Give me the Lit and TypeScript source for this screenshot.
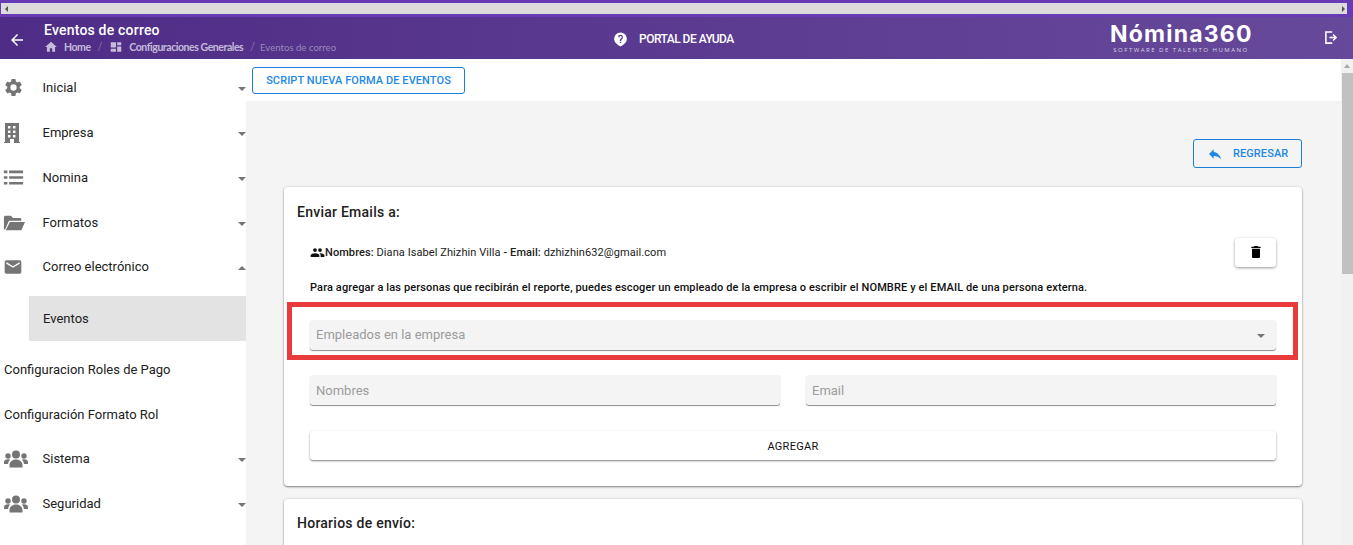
import { LitElement, html, css, svg } from "lit";
import { customElement } from "lit/decorators.js";

const icons: Record<string, any> = {
  gear: svg`<path d="M19.14 12.94c.04-.3.06-.61.06-.94s-.02-.64-.07-.94l2.03-1.58a.5.5 0 0 0 .12-.61l-1.92-3.32a.5.5 0 0 0-.59-.22l-2.39.96a7 7 0 0 0-1.62-.94l-.36-2.54a.48.48 0 0 0-.48-.41h-3.84a.47.47 0 0 0-.47.41l-.36 2.54c-.59.24-1.13.57-1.62.94l-2.39-.96a.49.49 0 0 0-.59.22L2.74 8.87a.48.48 0 0 0 .12.61l2.03 1.58c-.05.3-.09.63-.09.94s.02.64.07.94l-2.03 1.58a.5.5 0 0 0-.12.61l1.92 3.32c.12.22.37.29.59.22l2.39-.96c.5.38 1.03.7 1.62.94l.36 2.54c.05.24.24.41.48.41h3.84c.24 0 .44-.17.47-.41l.36-2.54c.59-.24 1.13-.56 1.62-.94l2.39.96c.22.08.47 0 .59-.22l1.92-3.32a.48.48 0 0 0-.12-.61l-2.01-1.58zM12 15.6A3.6 3.6 0 1 1 12 8.4a3.6 3.6 0 0 1 0 7.2z"/>`,
  building: svg`<path fill-rule="evenodd" d="M5 2h14v19h1v1h-6v-4h-4v4H4v-1h1V2zm3 3v2.500h2.500V5H8zm5 0v2.500h2.500V5H13zM8 9.500V12h2.500V9.500H8zm5 0V12h2.500V9.500H13zM8 14v2.500h2.500V14H8zm5 0v2.500h2.500V14H13z"/>`,
  list: svg`<path d="M1 4h4v3H1zM7 4h16v3H7zM1 10.500h4v3H1zM7 10.500h16v3H7zM1 17h4v3H1zM7 17h16v3H7z"/>`,
  folder: svg`<path d="M1 5.500C1 4.700 1.700 4 2.500 4h6L11 6.500h7.500c.8 0 1.500.7 1.500 1.500v1.500H6.500L2.300 19H1V5.500zM7.500 11H24l-4 9H3l4.500-9z"/>`,
  mail: svg`<path d="M20 4H4a2 2 0 0 0-2 2v12a2 2 0 0 0 2 2h16a2 2 0 0 0 2-2V6a2 2 0 0 0-2-2zm0 4-8 5-8-5V6l8 5 8-5v2z"/>`,
  users: svg`<path d="M12 3.500a4 4 0 1 1 0 8 4 4 0 0 1 0-8zM4 6.300a2.700 2.700 0 1 1 0 5.400 2.700 2.700 0 0 1 0-5.400zM20 6.300a2.700 2.700 0 1 1 0 5.400 2.700 2.700 0 0 1 0-5.400zM5.500 20.500V18c0-3 2.500-5.500 6.500-5.500s6.500 2.500 6.500 5.500v2.500h-13zM0 17v-2c0-1.800 1.800-2.700 4-2.700.8 0 1.500.1 2 .4-1.200 1.200-1.900 2.800-1.900 4.300H0zM24 17h-4.100c0-1.500-.7-3.100-1.900-4.300.5-.3 1.200-.4 2-.4 2.200 0 4 .9 4 2.700v2z"/>`,
  group: svg`<path d="M16 11a3 3 0 1 0 0-6 3 3 0 0 0 0 6zm-8 0a3 3 0 1 0 0-6 3 3 0 0 0 0 6zm0 2c-2.330 0-7 1.170-7 3.500V19h14v-2.500C15 14.170 10.330 13 8 13zm8 0c-.29 0-.62.02-.97.05C16.190 13.890 17 15.020 17 16.500V19h6v-2.500c0-2.330-4.670-3.500-7-3.500z"/>`,
  back: svg`<path d="M20 11H7.830l5.590-5.590L12 4l-8 8 8 8 1.410-1.410L7.830 13H20v-2z"/>`,
  home: svg`<path d="M10 20v-6h4v6h5v-8h3L12 3 2 12h3v8z"/>`,
  dash: svg`<path d="M3 4h9v9H3zM14 4h7v5h-7zM14 11h7v9h-7zM3 15h9v5H3z"/>`,
  help: svg`<path fill-rule="evenodd" d="M12 2a9 9 0 0 0-9 9c0 5 4 8 9 11 5-3 9-6 9-11a9 9 0 0 0-9-9zm1 15h-2v-2h2v2zm1.800-6.200-.8.9c-.7.6-1 1.100-1 2.300h-2v-.5c0-1 .4-1.800 1-2.400l1.200-1.300c.3-.3.500-.7.500-1.100 0-.8-.7-1.500-1.500-1.500s-1.500.7-1.500 1.500H8.500a3.500 3.500 0 1 1 7 0c0 .9-.3 1.600-.7 2.100z"/>`,
  logout: svg`<path d="M3 3h10v2.200H5.200v13.600H13V21H3V3zM13.500 8.500 14.900 7l5.100 5-5.100 5-1.400-1.500 2.400-2.400H9v-2.200h6.900l-2.400-2.400z"/>`,
  reply: svg`<path d="M10 9V5l-7 7 7 7v-4.100c5 0 8.500 1.600 11 5.100-1-5-4-10-11-11z"/>`,
  trash: svg`<path d="M6 19c0 1.100.9 2 2 2h8c1.100 0 2-.9 2-2V7H6v12zM19 4h-3.500l-1-1h-5l-1 1H5v2h14V4z"/>`,
};

const icon = (name: string, cls = "") =>
  html`<svg class=${cls} viewBox="0 0 24 24" fill="currentColor">${icons[name]}</svg>`;

type NavItem = { label: string; icon?: string; caret?: "down" | "up"; sub?: boolean; tight?: boolean };

const nav: NavItem[] = [
  { label: "Inicial", icon: "gear", caret: "down" },
  { label: "Empresa", icon: "building", caret: "down" },
  { label: "Nomina", icon: "list", caret: "down" },
  { label: "Formatos", icon: "folder", caret: "down" },
  { label: "Correo electrónico", icon: "mail", caret: "up", tight: true },
  { label: "Eventos", sub: true },
  { label: "Configuracion Roles de Pago" },
  { label: "Configuración Formato Rol" },
  { label: "Sistema", icon: "users", caret: "down", tight: true },
  { label: "Seguridad", icon: "users", caret: "down" },
];

@customElement("app-root")
export class AppRoot extends LitElement {
  static styles = css`
    :host {
      display: flex;
      flex-direction: column;
      width: 1353px;
      height: 545px;
      overflow: hidden;
      font-family: Roboto, "Liberation Sans", sans-serif;
      font-size: 13px;
      color: #212121;
      background: #fff;
    }
    .top-strip {
      flex: none;
      height: 17px;
      box-sizing: border-box;
      padding: 3px 6px 3px 1px;
      background: #683ab3;
    }
    .hscroll {
      height: 11px;
      background: #dcdcdc;
      display: flex;
      justify-content: space-between;
      align-items: center;
      padding: 0 2px 0 4px;
    }
    .arrow-l,
    .arrow-r {
      width: 0;
      height: 0;
      border-top: 3px solid transparent;
      border-bottom: 3px solid transparent;
    }
    .arrow-l {
      border-right: 3px solid #555;
    }
    .arrow-r {
      border-left: 3px solid #555;
    }
    header {
      flex: none;
      height: 42px;
      display: flex;
      align-items: center;
      color: #fff;
      background: linear-gradient(90deg, #4f2c86, #67499b);
    }
    .back {
      width: 18px;
      height: 18px;
      margin: 4px 18px 0 8px;
      flex: none;
    }
    .titles {
      width: 558px;
      flex: none;
      align-self: flex-start;
      padding-top: 5px;
    }
    .title {
      font-size: 14px;
      font-weight: 500;
      line-height: 16px;
      letter-spacing: 0.2px;
    }
    .crumbs {
      display: flex;
      align-items: center;
      font-family: Lato, sans-serif;
      font-size: 10.500px;
      height: 14px;
      margin-top: 2px;
      color: rgba(255, 255, 255, 0.68);
    }
    .crumbs svg {
      width: 14px;
      height: 14px;
      margin-right: 6px;
    }
    .crumbs b {
      font-weight: 700;
      letter-spacing: -0.44px;
    }
    .crumbs i {
      font-style: normal;
      margin: 0 7px;
      color: rgba(255, 255, 255, 0.35);
    }
    .crumbs span {
      color: rgba(255, 255, 255, 0.42);
      font-size: 9.600px;
      margin-left: -2px;
    }
    .portal {
      display: flex;
      align-items: center;
      width: 498px;
      flex: none;
      margin: 2px 0 0 10px;
      font-size: 12px;
      font-weight: 500;
      letter-spacing: -0.52px;
    }
    .portal svg {
      width: 17px;
      height: 17px;
      margin-right: 10px;
    }
    .logo {
      width: 170px;
      flex: none;
      text-align: center;
      padding-right: 28px;
      box-sizing: border-box;
    }
    .logo-name {
      font-family: Inter, sans-serif;
      font-weight: 700;
      font-size: 23px;
      line-height: 23px;
      letter-spacing: 1.200px;
      margin-top: 1px;
      white-space: nowrap;
    }
    .logo-sub {
      font-family: "Open Sans", sans-serif;
      font-size: 6px;
      line-height: 8px;
      letter-spacing: 1.500px;
      white-space: nowrap;
      color: rgba(255, 255, 255, 0.75);
    }
    .logout {
      width: 17px;
      height: 17px;
      margin-left: 43px;
      margin-top: -2px;
      flex: none;
    }
    .body {
      flex: 1;
      min-height: 0;
      display: flex;
    }
    nav {
      flex: none;
      width: 246px;
      padding-top: 6px;
      box-sizing: border-box;
    }
    .item {
      height: 45px;
      display: flex;
      align-items: center;
      padding-left: 4px;
    }
    .item.tight {
      margin-top: -1px;
    }
    .item.sub {
      margin: 7px 0 6px 29px;
      padding-left: 14px;
      background: #e3e3e3;
    }
    .ico {
      flex: none;
      width: 38.500px;
      display: flex;
      align-items: center;
      color: #757575;
    }
    .ico.gear svg {
      width: 21px;
      height: 21px;
      margin-left: -1.400px;
    }
    .ico.building svg {
      width: 24px;
      height: 24px;
      margin-left: -4px;
    }
    .ico.list svg {
      width: 21px;
      height: 21px;
      margin-left: -1px;
    }
    .ico.folder svg {
      width: 22px;
      height: 22px;
      margin-left: -1px;
    }
    .ico.mail svg {
      width: 20px;
      height: 20px;
      margin-left: -0.700px;
    }
    .ico.users svg {
      width: 24px;
      height: 24px;
    }
    .label {
      flex: 1;
    }
    .caret {
      width: 0;
      height: 0;
      border-left: 4px solid transparent;
      border-right: 4px solid transparent;
      border-top: 4px solid #757575;
      transform: translateY(1px);
    }
    .caret.up {
      border-top: 0;
      border-bottom: 4px solid #757575;
    }
    main {
      flex: 1;
      min-width: 0;
      display: flex;
      flex-direction: column;
    }
    .toolbar {
      flex: none;
      height: 42px;
      padding: 8px 0 0 6px;
      box-sizing: border-box;
    }
    .outline {
      display: inline-flex;
      align-items: center;
      justify-content: center;
      box-sizing: border-box;
      border: 1px solid #1a7fd8;
      border-radius: 3px;
      background: transparent;
      color: #1e88e5;
      font-family: inherit;
      font-size: 11px;
      font-weight: 500;
      letter-spacing: 0.08px;
    }
    .script {
      width: 213px;
      height: 27px;
    }
    .content {
      flex: 1;
      min-height: 0;
      background: #f4f4f4;
      padding: 38px 39px 0 38px;
    }
    .actions {
      display: flex;
      justify-content: flex-end;
    }
    .regresar {
      width: 109px;
      height: 29px;
      justify-content: flex-start;
      padding: 0 0 0 13px;
      gap: 10px;
    }
    .regresar svg {
      width: 16px;
      height: 16px;
    }
    .card {
      position: relative;
      background: #fff;
      border-radius: 4px;
      box-shadow: 0 1px 2px rgba(0, 0, 0, 0.45), 0 0 3px rgba(0, 0, 0, 0.12);
      margin-top: 19px;
      padding: 0 26px 0 26px;
      box-sizing: border-box;
    }
    .card.main-card {
      height: 299px;
    }
    .card.next {
      margin-top: 13px;
      height: 60px;
    }
    .card.next h3 {
      padding-top: 16px;
    }
    h3 {
      font-size: 14px;
      font-weight: 500;
      line-height: 16px;
      letter-spacing: 0.25px;
      margin: 0 0 0 -13px;
      padding-top: 17px;
      color: #212121;
    }
    .person {
      display: flex;
      align-items: center;
      justify-content: space-between;
      margin-top: 17px;
      height: 30px;
      font-size: 11px;
    }
    .person-text {
      display: flex;
      align-items: center;
      letter-spacing: 0.08px;
    }
    .person-text svg {
      flex: none;
      width: 15px;
      height: 15px;
      color: #111;
    }
    .person-text span {
      white-space: pre;
    }
    .person-text b {
      font-weight: 500;
    }
    .trash {
      width: 41px;
      height: 29px;
      display: flex;
      align-items: center;
      justify-content: center;
      background: #fff;
      border-radius: 3px;
      box-shadow: 0 1px 3px rgba(0, 0, 0, 0.4);
    }
    .trash svg {
      width: 16px;
      height: 16px;
      color: #000;
    }
    .hint {
      font-size: 11px;
      font-weight: 500;
      line-height: 14px;
      margin-top: 14px;
      color: #111;
      letter-spacing: 0.12px;
    }
    .field {
      height: 30px;
      box-sizing: border-box;
      display: flex;
      align-items: center;
      padding: 0 6px;
      background: #f4f4f4;
      border-radius: 3px;
      box-shadow: 0 1px 1px rgba(0, 0, 0, 0.45);
      color: #9c9c9c;
      font-size: 13px;
    }
    .select {
      justify-content: space-between;
      margin-top: 25px;
      padding-right: 11px;
      padding-bottom: 1px;
    }
    .two {
      display: grid;
      grid-template-columns: 470px 470px;
      justify-content: space-between;
      margin-top: 25px;
    }
    .add {
      margin-top: 26px;
      height: 29px;
      padding-top: 1px;
      box-sizing: border-box;
      display: flex;
      align-items: center;
      justify-content: center;
      background: #fff;
      border-radius: 3px;
      box-shadow: 0 1px 2px rgba(0, 0, 0, 0.5);
      font-size: 11px;
      letter-spacing: 0.3px;
      color: #111;
    }
    .redbox {
      position: absolute;
      left: 3px;
      right: 4px;
      top: 114.500px;
      height: 58.500px;
      box-sizing: border-box;
      border: 5px solid #e93a3c;
      pointer-events: none;
    }
    .vscroll {
      flex: none;
      width: 12px;
      background: #f1f1f1;
      display: flex;
      flex-direction: column;
      align-items: center;
    }
    .arrow-u {
      width: 0;
      height: 0;
      margin: 5px 0 5px;
      border-left: 3.500px solid transparent;
      border-right: 3.500px solid transparent;
      border-bottom: 4px solid #a8a8a8;
    }
    .thumb {
      width: 100%;
      height: 201px;
      margin-left: 1px;
      background: #c1c1c1;
    }
  `;

  render() {
    return html`
      <div class="top-strip">
        <div class="hscroll"><span class="arrow-l"></span><span class="arrow-r"></span></div>
      </div>
      <header>
        ${icon("back", "back")}
        <div class="titles">
          <div class="title">Eventos de correo</div>
          <div class="crumbs">
            ${icon("home")}<b>Home</b><i>/</i>${icon("dash")}<b>Configuraciones Generales</b><i>/</i><span>Eventos de correo</span>
          </div>
        </div>
        <div class="portal">${icon("help")}PORTAL DE AYUDA</div>
        <div class="logo">
          <div class="logo-name">Nómina360</div>
          <div class="logo-sub">SOFTWARE DE TALENTO HUMANO</div>
        </div>
        ${icon("logout", "logout")}
      </header>
      <div class="body">
        <nav>
          ${nav.map(
            (n) => html`
              <div class="item ${n.sub ? "sub" : ""} ${n.tight ? "tight" : ""}">
                ${n.icon ? html`<span class="ico ${n.icon}">${icon(n.icon)}</span>` : ""}
                <span class="label">${n.label}</span>
                ${n.caret ? html`<span class="caret ${n.caret === "up" ? "up" : ""}"></span>` : ""}
              </div>
            `
          )}
        </nav>
        <main>
          <div class="toolbar"><button class="outline script">SCRIPT NUEVA FORMA DE EVENTOS</button></div>
          <div class="content">
            <div class="actions">
              <button class="outline regresar">${icon("reply")}REGRESAR</button>
            </div>
            <section class="card main-card">
              <h3>Enviar Emails a:</h3>
              <div class="person">
                <div class="person-text">
                  ${icon("group")}<span><b>Nombres: </b>Diana Isabel Zhizhin Villa <b>- Email: </b>dzhizhin632@gmail.com</span>
                </div>
                <div class="trash">${icon("trash")}</div>
              </div>
              <div class="hint">
                Para agregar a las personas que recibirán el reporte, puedes escoger un empleado de la empresa o escribir el NOMBRE y el EMAIL de una persona externa.
              </div>
              <div class="field select">Empleados en la empresa<span class="caret"></span></div>
              <div class="two">
                <div class="field">Nombres</div>
                <div class="field">Email</div>
              </div>
              <div class="add">AGREGAR</div>
              <div class="redbox"></div>
            </section>
            <section class="card next"><h3>Horarios de envío:</h3></section>
          </div>
        </main>
        <div class="vscroll">
          <span class="arrow-u"></span>
          <div class="thumb"></div>
        </div>
      </div>
    `;
  }
}
